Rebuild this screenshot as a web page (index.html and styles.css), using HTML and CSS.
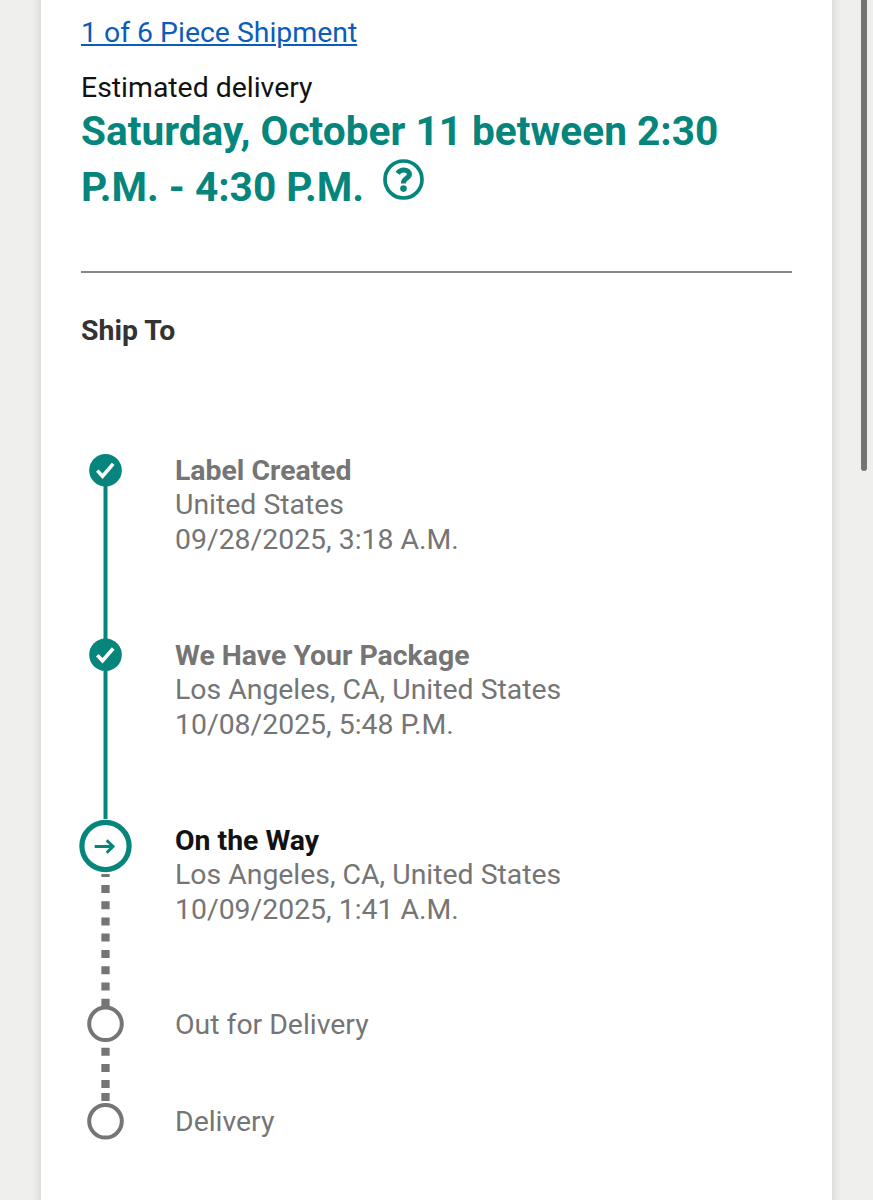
FILE: index.html
```html
<!DOCTYPE html>
<html lang="en">
<head>
	<meta charset="UTF-8">
	<title>Shipment Progress</title>
	<link rel="stylesheet" href="styles.css">
</head>
<body>
	<div class="card">
		<a class="piece" href="#">1 of 6 Piece Shipment</a>
		<p class="label">Estimated delivery</p>
		<h1 class="date">Saturday, October 11 between 2:30 P.M. - 4:30 P.M.
			<svg class="help" viewBox="0 0 41 41">
				<circle cx="20.5" cy="20.5" r="18.5" fill="none" stroke="currentColor" stroke-width="3.7"/>
				<path d="M14.6 14.4C16.3 11.8 18.4 11 20.7 11C24.3 11 26.4 12.8 26.4 15.5C26.4 19.2 20.3 19 20.3 24.6" fill="none" stroke="currentColor" stroke-width="5"/>
				<circle cx="20.5" cy="29.6" r="3.3" fill="currentColor"/>
			</svg>
		</h1>
		<h2 class="shipto">Ship To</h2>
		<ul class="steps">
			<li class="step done">
				<svg class="rail" viewBox="0 0 52 185">
					<path d="M25.5 17V185" stroke="currentColor" stroke-width="4"/>
					<circle cx="25.5" cy="17.2" r="16.3" fill="currentColor"/>
					<path d="M17.3 17.6L22.5 23.2L33.2 10.9" fill="none" stroke="#fff" stroke-width="3.6"/>
				</svg>
				<div class="info">
					<h3>Label Created</h3>
					<p>United States</p>
					<p>09/28/2025, 3:18 A.M.</p>
				</div>
			</li>
			<li class="step done">
				<svg class="rail" viewBox="0 0 52 185">
					<path d="M25.5 0V181" stroke="currentColor" stroke-width="4"/>
					<circle cx="25.5" cy="16.8" r="16.3" fill="currentColor"/>
					<path d="M17.3 17.2L22.5 22.8L33.2 10.5" fill="none" stroke="#fff" stroke-width="3.6"/>
				</svg>
				<div class="info">
					<h3>We Have Your Package</h3>
					<p>Los Angeles, CA, United States</p>
					<p>10/08/2025, 5:48 P.M.</p>
				</div>
			</li>
			<li class="step current">
				<svg class="rail" viewBox="0 0 52 185">
					<circle cx="25.5" cy="23" r="23.6" fill="none" stroke="currentColor" stroke-width="5.2"/>
					<path d="M14.7 23.5H33M26.7 17.2L33 23.5L26.7 29.8" fill="none" stroke="currentColor" stroke-width="3"/>
					<path class="dots" d="M25.5 51V54M25.5 62V70M25.5 78.2V86.2M25.5 94.4V102.4M25.5 110.6V118.6M25.5 127V135M25.5 143.2V151.2M25.5 159.5V167.5M25.5 175.8V184"/>
				</svg>
				<div class="info">
					<h3>On the Way</h3>
					<p>Los Angeles, CA, United States</p>
					<p>10/09/2025, 1:41 A.M.</p>
				</div>
			</li>
			<li class="step next">
				<svg class="rail" viewBox="0 0 52 97">
					<circle cx="25.5" cy="15.8" r="16.3" fill="none" stroke="currentColor" stroke-width="4"/>
					<path class="dots" d="M25.5 39.7V47.7M25.5 56V64M25.5 72V80M25.5 85V93"/>
				</svg>
				<div class="info">
					<p>Out for Delivery</p>
				</div>
			</li>
			<li class="step next">
				<svg class="rail" viewBox="0 0 52 97">
					<circle cx="25.5" cy="16.3" r="16.3" fill="none" stroke="currentColor" stroke-width="4"/>
				</svg>
				<div class="info">
					<p>Delivery</p>
				</div>
			</li>
		</ul>
	</div>
	<div class="scrollbar"></div>
</body>
</html>
```

FILE: styles.css
```css
*{
	margin: 0;
	padding: 0;
	box-sizing: border-box;
}
html,
body{
	height: 1200px;
	overflow: hidden;
}
body{
	padding: 0 41px;
	background: #efefee;
	font-family: Roboto, sans-serif;
	font-size: 28.4px;
	line-height: 34.6px;
	color: #121212;
}
/* taller than the window so the side shadow doesn't fade out */
.card{
	height: 1240px;
	margin-top: -20px;
	padding: 36px 40px 0;
	background: #fff;
	box-shadow: 0 0 10px rgba(0,0,0,0.15);
}
.piece{
	display: block;
	color: #0a5cbd;
	text-decoration-thickness: 2px;
	text-underline-offset: 2px;
}
.label{
	margin-top: 20px;
}
.date{
	height: 169px;
	margin-top: -1px;
	border-bottom: 2px solid #8a8484;
	font-size: 40.6px;
	line-height: 54.5px;
	color: #05857b;
}
.help{
	width: 41px;
	height: 41px;
	margin-left: 9px;
	vertical-align: 1px;
}
.shipto{
	margin-top: 41px;
	font-size: 28.4px;
	color: #333;
}
.steps{
	margin-top: 104px;
	list-style: none;
}
.step{
	display: grid;
	grid-template-columns: 52px 1fr;
	gap: 43px;
	height: 185px;
	margin-left: -1px;
}
.rail{
	width: 52px;
	height: 185px;
	overflow: visible;
	color: #05857b;
}
.info{
	padding-top: 1px;
	color: #757575;
}
.info h3{
	font-size: 28.4px;
}
.current h3{
	color: #121212;
}
.next{
	height: 97px;
}
.next .rail{
	height: 97px;
	color: #757575;
}
.next .info{
	padding-top: 0.5px;
}
.dots{
	stroke: #757575;
	stroke-width: 8.3px;
}
.scrollbar{
	position: absolute;
	top: -10px;
	right: 6px;
	width: 6px;
	height: 481px;
	border-radius: 3px;
	background: #757574;
}
```
